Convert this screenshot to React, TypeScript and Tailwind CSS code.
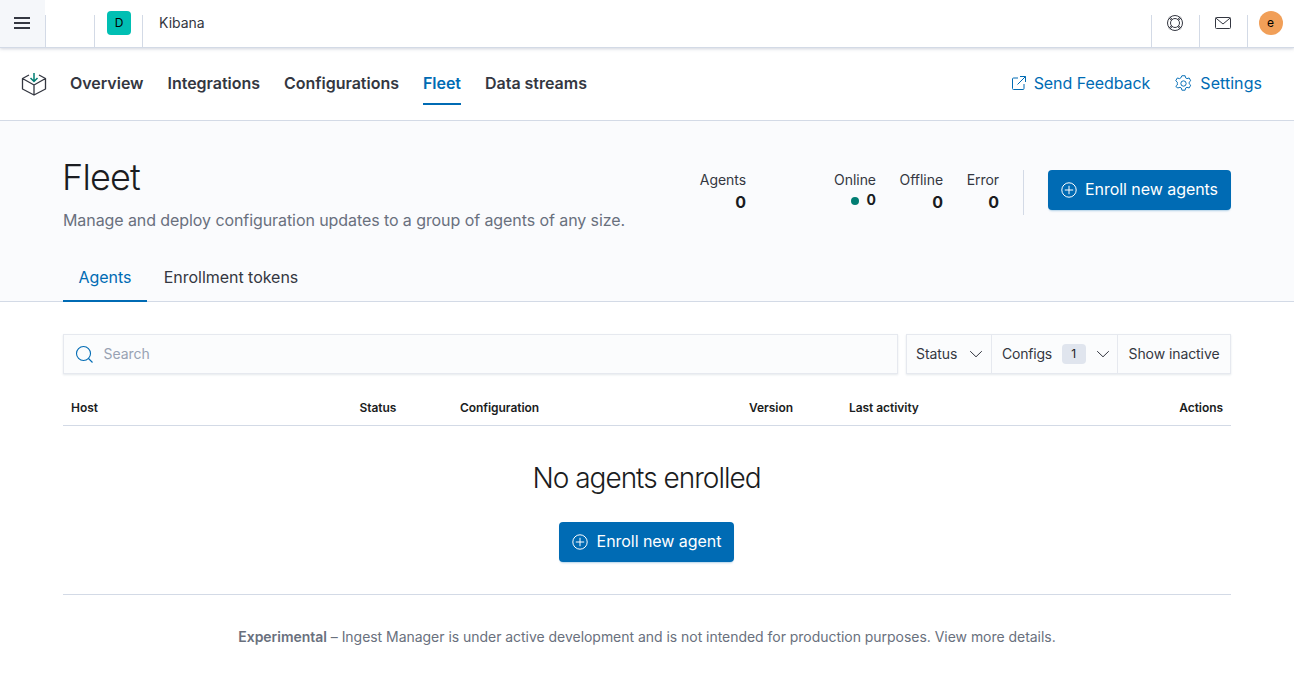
import React from "react";

function PlusCircle({ className = "" }: { className?: string }) {
  return (
    <svg width="16" height="16" viewBox="0 0 16 16" fill="none" className={className}>
      <circle cx="8" cy="8" r="7.200" stroke="currentColor" strokeWidth="1" />
      <path d="M8 3.800v8.400M3.800 8h8.400" stroke="currentColor" strokeWidth="1" />
    </svg>
  );
}

function Chevron() {
  return (
    <svg width="14" height="8" viewBox="0 0 14 8" fill="none" className="text-[#343741]">
      <path d="M1.200 1.200 7 6.800l5.800-5.600" stroke="currentColor" strokeWidth="1" />
    </svg>
  );
}

function HeaderCell({ children, className = "" }: { children?: React.ReactNode; className?: string }) {
  return (
    <div className={"relative flex h-[47px] items-center justify-center " + className}>
      <span className="absolute bottom-0 left-0 top-[15px] w-px bg-[#d3dae6]" />
      {children}
    </div>
  );
}

function Stat({ label, value, width, dot }: { label: string; value: string; width: string; dot?: boolean }) {
  return (
    <div className={"flex flex-col items-end " + width}>
      <span className="text-[14px] leading-[21px] tracking-[-0.05px] text-[#343741]">{label}</span>
      <span className={"flex items-center font-bold text-[#1a1c21] " + (dot ? "h-[20px] text-[14px] leading-[20px]" : "h-[24px] text-[16px] leading-[24px]")}>
        {dot && <span className="mr-[8px] mt-[2px] h-[8px] w-[8px] rounded-full bg-[#017d73]" />}
        {value}
      </span>
    </div>
  );
}

function Th({ children, className = "" }: { children: React.ReactNode; className?: string }) {
  return <div className={"text-[12px] font-semibold leading-[18px] tracking-[-0.05px] text-[#1a1c21] " + className}>{children}</div>;
}

export default function App() {
  return (
    <div className="flex min-h-[692px] flex-col bg-white font-['Inter',sans-serif] text-[#343741]">
      <header className="relative z-10 flex h-[48px] items-center border-b border-[#d3dae6] bg-white shadow-[0_1px_3px_rgba(152,162,179,0.45)]">
        <div className="flex h-[47px] w-[45px] items-center justify-center bg-[#f5f7fa] pb-[2px] pr-[2px]">
          <svg width="16" height="12" viewBox="0 0 16 12" fill="none">
            <path d="M0 1h16M0 6h16M0 11h16" stroke="#343741" strokeWidth="2" />
          </svg>
        </div>
        <HeaderCell className="w-[49px]" />
        <HeaderCell className="w-[48px] pb-[2px] pl-[2px]">
          <span className="flex h-[24px] w-[24px] items-center justify-center rounded-[4px] bg-[#00bfb3] text-[12px] text-black">D</span>
        </HeaderCell>
        <HeaderCell className="w-[1px]" />
        <span className="mb-[2px] ml-[16px] text-[14px] text-[#343741]">Kibana</span>
        <div className="ml-auto flex">
          <HeaderCell className="w-[48px] pb-[1px]">
            <svg width="18" height="18" viewBox="0 0 18 18" fill="none" stroke="#343741" strokeWidth="1">
              <circle cx="9" cy="9" r="7.500" />
              <circle cx="9" cy="9" r="4.500" />
              <path d="M4 2.800 6.200 5.600M14 2.800l-2.200 2.800M4 15.200l2.200-2.800M14 15.200l-2.200-2.800M2.800 4l2.800 2.200M15.200 4l-2.800 2.200M2.800 14l2.800-2.200M15.200 14l-2.800-2.200" />
            </svg>
          </HeaderCell>
          <HeaderCell className="w-[48px] pb-[2px]">
            <svg width="16" height="12" viewBox="0 0 16 12" fill="none" stroke="#343741" strokeWidth="1">
              <rect x="0.500" y="0.500" width="15" height="11" rx="1" />
              <path d="M0.800 1 8 7l7.200-6" />
            </svg>
          </HeaderCell>
          <HeaderCell className="w-[47px] pb-[1px]">
            <span className="flex h-[24px] w-[24px] items-center justify-center rounded-full bg-[#f19f58] text-[12px] text-black">e</span>
          </HeaderCell>
        </div>
      </header>

      <nav className="flex h-[73px] items-center border-b border-[#d3dae6] pl-[21px] pr-[32px]">
        <svg width="26" height="24" viewBox="0 0 26 24" fill="none" className="mr-[23px]">
          <path d="M8 3 1.500 6.500v10.500L13 23l11.500-6V6.500L18 3M1.500 6.500 13 13l11.500-6.500M13 13v10" stroke="#343741" strokeWidth="1.300" strokeLinejoin="round" />
          <path d="M13 1v8M9.500 6 13 9.500 16.500 6" stroke="#017d73" strokeWidth="1.500" />
        </svg>
        <div className="flex h-full items-center gap-[24px] pb-[2px] text-[16px] font-semibold leading-[24px] tracking-[-0.02px]">
          <span>Overview</span>
          <span>Integrations</span>
          <span>Configurations</span>
          <span className="relative text-[#006bb4]">
            Fleet
            <span className="absolute -bottom-[10px] left-0 right-0 h-[2px] bg-[#006bb4]" />
          </span>
          <span>Data streams</span>
        </div>
        <div className="ml-auto flex items-center pb-[2px] text-[16px] tracking-[-0.06px] text-[#006bb4]">
          <svg width="14" height="14" viewBox="0 0 14 14" fill="none" stroke="currentColor" strokeWidth="1" className="mr-[8px]">
            <path d="M6 2H1.500a1 1 0 0 0-1 1v9.500a1 1 0 0 0 1 1H11a1 1 0 0 0 1-1V8M8 .500h5.500V6M13.500 .500 5.500 8.500" />
          </svg>
          <span>Send Feedback</span>
          <svg width="17" height="17" viewBox="0 0 16 16" fill="none" stroke="currentColor" strokeWidth="0.900" className="ml-[25px] mr-[8px]">
            <circle cx="8" cy="8" r="2.500" />
            <path d="M6.500 .700h3l.5 2 1.300.7 2-.6 1.500 2.600-1.500 1.400v1.400l1.500 1.400-1.500 2.600-2-.6-1.300.7-.5 2h-3l-.5-2-1.300-.7-2 .6L.700 10.800l1.500-1.400V8 6.800L.700 5.400l1.500-2.600 2 .6 1.300-.7z" strokeLinejoin="round" />
          </svg>
          <span className="tracking-[0.05px]">Settings</span>
        </div>
      </nav>

      <section className="h-[181px] border-b border-[#d3dae6] bg-[#fafbfd] px-[63px]">
        <div className="flex h-[136px] justify-between">
          <div className="pt-[32px]">
            <h1 className="-ml-[1px] text-[36px] font-light leading-[48px] tracking-[-0.8px] text-[#1a1c21]">Fleet</h1>
            <p className="mt-[7px] text-[16px] leading-[24px] tracking-[-0.08px] text-[#69707d]">
              Manage and deploy configuration updates to a group of agents of any size.
            </p>
          </div>
          <div className="flex items-start pt-[48px]">
            <Stat label="Agents" value="0" width="w-[82px]" />
            <Stat label="Online" value="0" width="w-[130px]" dot />
            <Stat label="Offline" value="0" width="w-[67px]" />
            <Stat label="Error" value="0" width="w-[56px]" />
            <span className="ml-[24px] mt-[1px] h-[45px] w-px bg-[#d3dae6]" />
            <button className="ml-[24px] mt-[1px] flex h-[40px] w-[183px] items-center justify-center rounded-[4px] bg-[#006bb4] pb-[2px] text-[16px] font-normal tracking-[-0.05px] text-white shadow-[0_2px_2px_-1px_rgba(0,107,180,0.3)]">
              <PlusCircle className="mr-[8px] mt-[2px]" />
              Enroll new agents
            </button>
          </div>
        </div>
        <div className="flex h-[44px] text-[16px] tracking-[-0.03px]">
          <div className="flex h-[45px] w-[84px] items-center justify-center border-b-2 border-[#006bb4] pb-[3px] font-normal text-[#006bb4]">Agents</div>
          <div className="flex h-[44px] w-[168px] items-center justify-center pb-[4px] text-[#343741]">Enrollment tokens</div>
        </div>
      </section>

      <main className="px-[63px] pt-[32px]">
        <div className="flex gap-[8px]">
          <div className="flex h-[40px] flex-1 items-center border border-[#e6e9ef] bg-[#fbfcfd] pl-[11px] shadow-[0_1px_2px_rgba(152,162,179,0.25)]">
            <svg width="19" height="19" viewBox="0 0 19 19" fill="none" stroke="#006bb4" strokeWidth="1.100">
              <circle cx="8.500" cy="8.500" r="7" />
              <path d="m13.500 13.500 4 4" />
            </svg>
            <span className="mb-[2px] ml-[9.5px] text-[14px] tracking-[-0.03px] text-[#98a2b3]">Search</span>
          </div>
          <div className="flex h-[40px] w-[325px] items-center border border-[#e6e9ef] bg-[#fbfcfd] text-[14px] tracking-[-0.08px] shadow-[0_1px_2px_rgba(152,162,179,0.25)]">
            <div className="flex h-full w-[85px] items-center border-r border-[#e6e9ef] pl-[9px]">
              <span className="mb-[2px]">Status</span>
              <span className="ml-[12px]"><Chevron /></span>
            </div>
            <div className="flex h-full w-[126px] items-center border-r border-[#e6e9ef] pl-[10px]">
              <span className="mb-[2px] tracking-[-0.2px]">Configs</span>
              <span className="ml-[9.5px] flex h-[20px] w-[24px] items-center justify-center rounded-[4px] bg-[#e0e5ee] pb-[1px] text-[12px] text-[#1a1c21]">1</span>
              <span className="ml-[10px]"><Chevron /></span>
            </div>
            <div className="mb-[2px] flex-1 pl-[10.5px]">Show inactive</div>
          </div>
        </div>

        <div className="mt-[16px] flex h-[36px] items-center border-b border-[#d3dae6] pl-[8px] pr-[8px]">
          <Th className="w-[288.500px]">Host</Th>
          <Th className="w-[100.500px]">Status</Th>
          <Th className="w-[289px]">Configuration</Th>
          <Th className="w-[100px]">Version</Th>
          <Th className="flex-1">Last activity</Th>
          <Th>Actions</Th>
        </div>

        <div className="flex h-[169px] flex-col items-center border-b border-[#d3dae6] pt-[32px]">
          <h2 className="mr-[1px] text-[28px] font-light leading-[40px] tracking-[-1px] text-[#1a1c21]">No agents enrolled</h2>
          <button className="mr-[1px] mt-[24px] flex h-[40px] w-[175px] items-center justify-center rounded-[4px] bg-[#006bb4] pb-[2px] text-[16px] font-normal tracking-[-0.05px] text-white shadow-[0_2px_2px_-1px_rgba(0,107,180,0.3)]">
            <PlusCircle className="mr-[9px] mt-[2px]" />
            Enroll new agent
          </button>
        </div>

        <p className="mt-[31px] text-center text-[14px] leading-[21px] tracking-[-0.035px] text-[#69707d]">
          <strong className="font-semibold">Experimental</strong> – Ingest Manager is under active development and is not intended for production purposes. View more details.
        </p>
      </main>
    </div>
  );
}
